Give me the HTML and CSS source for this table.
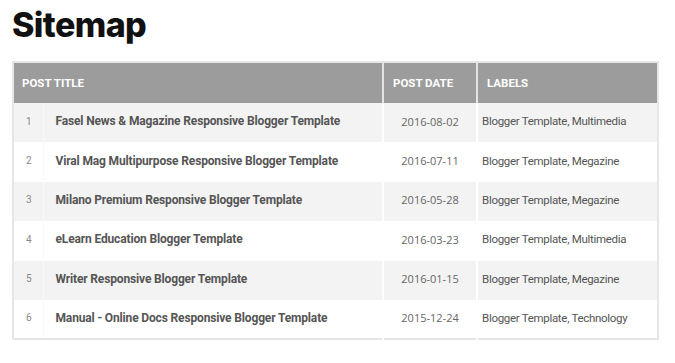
FILE: index.html
```html
<!DOCTYPE html>
<html>
<head>
<meta charset="utf-8">
<link rel="stylesheet" href="styles.css">
</head>
<body>
<h1 class="title">Sitemap</h1>
<table class="sitemap">
  <colgroup>
    <col class="w-num">
    <col class="w-name">
    <col class="w-date">
    <col class="w-labels">
  </colgroup>
  <thead>
    <tr>
      <th class="c-title" colspan="2">Post Title</th>
      <th class="c-date">Post Date</th>
      <th class="c-labels">Labels</th>
    </tr>
  </thead>
  <tbody>
    <tr><td class="c-num">1</td><td class="c-name">Fasel News &amp; Magazine Responsive Blogger Template</td><td class="c-date">2016-08-02</td><td class="c-labels">Blogger Template, Multimedia</td></tr>
    <tr><td class="c-num">2</td><td class="c-name">Viral Mag Multipurpose Responsive Blogger Template</td><td class="c-date">2016-07-11</td><td class="c-labels">Blogger Template, Megazine</td></tr>
    <tr><td class="c-num">3</td><td class="c-name">Milano Premium Responsive Blogger Template</td><td class="c-date">2016-05-28</td><td class="c-labels">Blogger Template, Megazine</td></tr>
    <tr><td class="c-num">4</td><td class="c-name">eLearn Education Blogger Template</td><td class="c-date">2016-03-23</td><td class="c-labels">Blogger Template, Multimedia</td></tr>
    <tr><td class="c-num">5</td><td class="c-name">Writer Responsive Blogger Template</td><td class="c-date">2016-01-15</td><td class="c-labels">Blogger Template, Megazine</td></tr>
    <tr><td class="c-num">6</td><td class="c-name">Manual - Online Docs Responsive Blogger Template</td><td class="c-date">2015-12-24</td><td class="c-labels">Blogger Template, Technology</td></tr>
  </tbody>
</table>
</body>
</html>
```
FILE: styles.css
```css
html, body { margin: 0; padding: 0; background: #fff; }
body { padding: 4px 0 0 12px; font-family: Roboto, "Liberation Sans", sans-serif; }

.title {
  margin: 0 0 15px 0;
  font-family: Inter, "Liberation Sans", sans-serif;
  font-weight: 800;
  font-size: 34px;
  line-height: 42px;
  letter-spacing: -0.6px;
  color: #111;
}

.sitemap {
  width: 647px;
  border-collapse: collapse;
  border: 2px solid #e6e6e6;
  table-layout: fixed;
}
.w-num { width: 30px; }
.w-name { width: 340px; }
.w-date { width: 94px; }
.w-labels { width: 181px; }

.sitemap th {
  background: #9c9c9c;
  color: #fff;
  text-transform: uppercase;
  font-weight: 700;
  font-size: 11.5px;
  text-align: left;
  height: 40px;
  padding: 0 8px;
  border-left: 2px solid #e4e4e4;
}
.sitemap th:first-child { border-left: 0; }
.sitemap th.c-date, .sitemap th.c-labels { padding-left: 9px; }

.sitemap td {
  height: 39.4px;
  padding: 0 0 3px 0;
  box-sizing: border-box;
  border-left: 2px solid #fff;
  color: #666;
  white-space: nowrap;
}
.sitemap tbody tr:nth-child(odd) td { background: #f3f3f3; }

.sitemap td.c-num { border-left: 0; padding-left: 12px; font-size: 10px; color: #888; }
.sitemap td.c-name { border-left: 1px solid #fafafa; padding-left: 12px; font-weight: 700; font-size: 12px; color: #555; letter-spacing: -0.15px; }
.sitemap td.c-date { text-align: center; font-family: "Open Sans", sans-serif; font-size: 11px; color: #666; }
.sitemap td.c-labels { padding-left: 4px; font-size: 11.5px; color: #555; letter-spacing: -0.3px; }
```
